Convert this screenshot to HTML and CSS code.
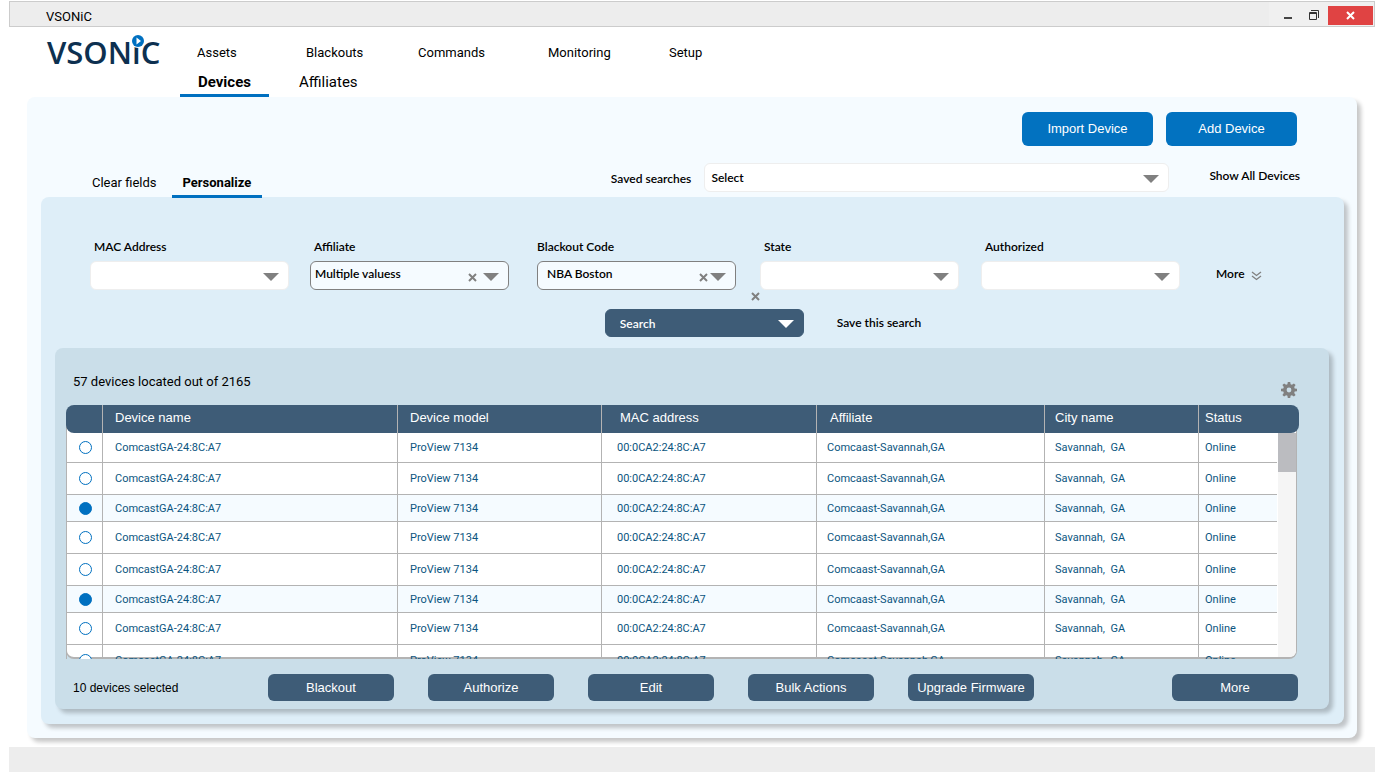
FILE: index.html
```html
<!DOCTYPE html>
<html lang="en">
<head>
  <meta charset="UTF-8">
  <title>VSONiC</title>
  <link rel="stylesheet" href="styles.css">
</head>
<body>

  <div class="window">
    <div class="titlebar">
      <span class="app-name">VSONiC</span>
      <div class="window-buttons">
        <button class="win-btn" aria-label="Minimize">
          <svg width="33" height="19"><path d="M15 11h8v2h-8z" fill="#444"/></svg>
        </button>
        <button class="win-btn" aria-label="Restore">
          <svg width="26" height="19" fill="none" stroke="#333"><path d="M9 4.500h7.500V12"/><path d="M7.500 6.500h7v7h-7z"/><path d="M7 7.500h8"/></svg>
        </button>
        <button class="win-btn win-close" aria-label="Close">
          <svg width="45" height="19" stroke="#fff" stroke-width="2"><path d="M19 6l7 7M26 6l-7 7"/></svg>
        </button>
      </div>
    </div>

    <header class="header">
      <svg class="logo" width="120" height="44" role="img" aria-label="VSONiC">
        <text x="0" y="30" class="logo-text">VSONiC</text>
        <circle cx="91" cy="7" r="7" fill="#fff"/>
        <circle cx="91" cy="7" r="6" fill="#0070c0"/>
        <path d="M89.500 3.500l4.500 3.500-4.500 3.500z" fill="#fff"/>
      </svg>
      <div class="menus">
        <nav class="main-nav">
          <a href="#">Assets</a>
          <a href="#">Blackouts</a>
          <a href="#">Commands</a>
          <a href="#">Monitoring</a>
          <a href="#">Setup</a>
        </nav>
        <nav class="sub-nav">
          <a href="#" class="active">Devices</a>
          <a href="#">Affiliates</a>
        </nav>
      </div>
    </header>

    <main class="page">
      <div class="page-actions">
        <button class="btn-primary">Import Device</button>
        <button class="btn-primary">Add Device</button>
      </div>

      <div class="search-bar">
        <div class="tabs">
          <a href="#">Clear fields</a>
          <a href="#" class="active">Personalize</a>
        </div>
        <div class="saved">
          <label for="saved">Saved searches</label>
          <div class="select saved-select">
            <select id="saved"><option>Select</option></select>
          </div>
          <a href="#" class="show-all">Show All Devices</a>
        </div>
      </div>

      <section class="filters">
        <div class="fields">
          <div class="field">
            <label for="mac">MAC Address</label>
            <div class="select"><select id="mac"><option></option></select></div>
          </div>
          <div class="field">
            <label for="affiliate">Affiliate</label>
            <div class="select filled">
              <select id="affiliate"><option>Multiple valuess</option></select>
              <button class="clear" aria-label="Clear affiliate"><svg width="9" height="9"><path d="M1 1l7 7M8 1l-7 7"/></svg></button>
            </div>
          </div>
          <div class="field flush">
            <label for="code">Blackout Code</label>
            <div class="select filled code-select">
              <select id="code"><option>NBA Boston</option></select>
              <button class="clear" aria-label="Clear blackout code"><svg width="9" height="9"><path d="M1 1l7 7M8 1l-7 7"/></svg></button>
            </div>
          </div>
          <div class="field">
            <label for="state">State</label>
            <div class="select"><select id="state"><option></option></select></div>
          </div>
          <div class="field">
            <label for="authorized">Authorized</label>
            <div class="select"><select id="authorized"><option></option></select></div>
          </div>
          <a href="#" class="more-link">More
            <svg width="11" height="10" fill="none" stroke="#808080" stroke-width="1.300"><path d="M1 1l4.500 3.500L10 1M1 5l4.500 3.500L10 5"/></svg>
          </a>
        </div>

        <div class="search-row">
          <button class="clear clear-all" aria-label="Clear search"><svg width="9" height="9"><path d="M1 1l7 7M8 1l-7 7"/></svg></button>
          <div class="select select-dark">
            <select id="search" aria-label="Search"><option>Search</option></select>
          </div>
          <a href="#">Save this search</a>
        </div>

        <section class="results">
          <div class="results-head">
            <span>57 devices located out of 2165</span>
            <button class="gear" aria-label="Table settings">
              <svg width="16" height="16" viewBox="0 0 16 16" fill="#808080">
                <path fill-rule="evenodd" d="M6.800 0h2.400l.4 2.300 1.300.5 2-1.400 1.700 1.700-1.400 2 .5 1.300 2.300.4v2.400l-2.300.4-.5 1.300 1.400 2-1.700 1.700-2-1.400-1.300.5-.4 2.300H6.800l-.4-2.300-1.300-.5-2 1.400-1.700-1.700 1.400-2-.5-1.300L0 9.200V6.800l2.300-.4.5-1.300-1.400-2 1.700-1.700 2 1.400 1.300-.5zM8 5.600a2.400 2.400 0 1 0 0 4.800a2.400 2.400 0 1 0 0-4.800z"/>
              </svg>
            </button>
          </div>

          <div class="table-wrap">
            <table class="devices">
              <colgroup>
                <col class="c-check"><col class="c-name"><col class="c-model"><col class="c-mac"><col class="c-aff"><col class="c-city"><col class="c-status"><col class="c-scroll">
              </colgroup>
              <thead>
                <tr>
                  <th></th>
                  <th>Device name</th>
                  <th>Device model</th>
                  <th class="mac">MAC address</th>
                  <th class="aff">Affiliate</th>
                  <th class="city">City name</th>
                  <th class="status">Status</th>
                  <th></th>
                </tr>
              </thead>
              <tbody id="rows"></tbody>
            </table>
            <div class="scrollbar"><div class="thumb"></div></div>
          </div>

          <div class="bulk">
            <span class="bulk-count">10 devices selected</span>
            <button class="btn-dark">Blackout</button>
            <button class="btn-dark">Authorize</button>
            <button class="btn-dark">Edit</button>
            <button class="btn-dark">Bulk Actions</button>
            <button class="btn-dark">Upgrade Firmware</button>
            <button class="btn-dark last">More</button>
          </div>
        </section>
      </section>
    </main>

    <footer class="footer"></footer>
  </div>

  <script>
    const selected = [false, false, true, false, false, true, false, false];

    document.getElementById('rows').innerHTML = selected.map((on, i) => `
      <tr class="${on ? 'selected' : ''}">
        <td><input type="checkbox" aria-label="Select device ${i + 1}" ${on ? 'checked' : ''}></td>
        <td>ComcastGA-24:8C:A7</td>
        <td>ProView 7134</td>
        <td class="mac">00:0CA2:24:8C:A7</td>
        <td class="aff">Comcaast-Savannah,GA</td>
        <td class="city">Savannah,&nbsp; GA</td>
        <td class="status">Online</td>
      </tr>
    `).join("");
  </script>

</body>
</html>
```
FILE: styles.css
```css
* {
  box-sizing: border-box;
}

body {
  margin: 0;
  background: #fff;
  color: #000;
  font-family: Roboto, sans-serif;
  font-size: 13px;
  line-height: 20px;
}

a {
  color: inherit;
  text-decoration: none;
}

button, select {
  font: inherit;
  color: inherit;
  padding: 0;
  border: none;
  background: none;
  cursor: pointer;
}

svg {
  display: block;
}

.window {
  margin: 0 9px;
  padding-top: 1px;
}

/* title bar */
.titlebar {
  display: flex;
  justify-content: space-between;
  height: 26px;
  padding-left: 36px;
  background: #ededed;
  border: 1px solid #ccc;
}

.app-name {
  padding-top: 5px;
}

.window-buttons {
  display: flex;
  align-items: flex-start;
  padding: 4px 1px 0 0;
  background: #f0f0f0;
}

.win-close {
  background: #e04343;
}

/* header */
.header {
  display: flex;
  height: 70px;
  padding: 7px 0 0 38px;
}

.logo {
  overflow: visible;
}

.logo-text {
  font-family: "Open Sans", sans-serif;
  font-size: 31px;
  font-weight: 600;
  fill: #0d3050;
}

.menus {
  padding: 9px 0 0 13px;
}

.main-nav {
  display: grid;
  grid-template-columns: 109px 112px 130px 121px auto;
  padding-left: 17px;
}

.sub-nav {
  display: flex;
  margin-top: 8px;
  font-size: 15px;
}

.sub-nav a {
  height: 26px;
  padding: 1px 18px 0;
  margin-right: 12px;
  border-bottom: 3px solid transparent;
}

.sub-nav .active,
.tabs .active {
  font-weight: bold;
  border-color: #0070c0;
}

/* page */
.page {
  margin: 0 18px;
  padding: 15px 13px 14px 14px;
  background: #f5fbff;
  border-radius: 8px;
  box-shadow: 4px 4px 4px rgba(0, 0, 0, 0.22);
}

.page-actions {
  display: flex;
  justify-content: flex-end;
  gap: 13px;
  padding-right: 47px;
}

.btn-primary {
  width: 131px;
  height: 34px;
  background: #0272c0;
  color: #fff;
  border-radius: 6px;
}

.btn-primary,
.btn-dark,
.devices th {
  font-family: "Liberation Sans", Arial, sans-serif;
  font-size: 13px;
}

.search-bar {
  display: flex;
  justify-content: space-between;
  height: 51px;
  padding: 17px 44px 0 40px;
}

.tabs {
  display: flex;
  padding-top: 7px;
}

.tabs a {
  position: relative;
  height: 28px;
  padding: 3px 11px 0;
  margin-right: 4px;
  border-bottom: 3px solid transparent;
}

.saved,
.filters {
  font-family: Lato, sans-serif;
  font-size: 12px;
  font-weight: 600;
}

.saved {
  display: flex;
  align-items: flex-start;
}

.saved label {
  padding: 6px 13px 0 0;
}

.saved-select {
  width: 465px;
}

.show-all {
  padding: 3px 0 0 40px;
}

/* drop-downs */
.select {
  position: relative;
}

.select select {
  display: block;
  appearance: none;
  width: 100%;
  height: 29px;
  padding: 0 44px 0 6px;
  background: #fff;
  border: 1px solid #eee;
  border-radius: 6px;
}

.select::after {
  content: "";
  position: absolute;
  top: 12px;
  right: 10px;
  border: 8px solid transparent;
  border-top-color: #808080;
  border-bottom: none;
  pointer-events: none;
}

.select.filled select {
  background: #f5fbff;
  border-color: #808080;
  padding: 0 44px 4px 4px;
}

.select.code-select select {
  padding-left: 9px;
}

.select.filled .clear {
  position: absolute;
  top: 12px;
  right: 32px;
}

.select.code-select .clear {
  right: 28px;
}

.clear svg {
  stroke: #808080;
  stroke-width: 2;
}

/* filters */
.filters {
  padding: 40px 15px 15px 14px;
  background: #deeef8;
  border-radius: 8px;
  box-shadow: 4px 4px 4px rgba(0, 0, 0, 0.22);
}

.fields {
  display: grid;
  grid-template-columns: 220fr 227fr 223fr 221fr 235fr 113fr;
  padding-left: 35px;
}

.field label {
  display: block;
  padding-left: 4px;
  margin-bottom: 4px;
}

.field.flush label {
  padding-left: 0;
}

.field .select {
  width: 199px;
}

.more-link {
  display: flex;
  gap: 6px;
  padding-top: 27px;
}

.more-link svg {
  margin-top: 7px;
}

.search-row {
  position: relative;
  display: flex;
  align-items: center;
  justify-content: center;
  gap: 33px;
  padding: 19px 0 11px 142px;
}

.clear-all {
  position: absolute;
  top: 2px;
  left: 696px;
}

.select-dark {
  width: 199px;
}

.select-dark select {
  height: 28px;
  padding-top: 2px;
  padding-left: 14px;
  background: #3e5c77;
  color: #fff;
  border-color: #3e5c77;
}

.select-dark::after {
  top: 11px;
  border-top-color: #fff;
}

/* results */
.results {
  padding: 0 30px 8px 11px;
  background: #cadee9;
  border-radius: 8px;
  box-shadow: 4px 4px 4px rgba(0, 0, 0, 0.22);
  font-family: Roboto, sans-serif;
  font-size: 13px;
  font-weight: 400;
}

.results-head {
  display: flex;
  justify-content: space-between;
  height: 57px;
  padding: 24px 2px 0 7px;
}

.gear {
  height: 16px;
  margin-top: 10px;
}

.table-wrap {
  position: relative;
  z-index: 0;
  height: 254px;
  overflow: hidden;
}

/* white frame behind the rows */
.table-wrap::before {
  content: "";
  position: absolute;
  z-index: -1;
  inset: 10px 2px 0 0;
  background: #fff;
  border: 1px solid #b3b3b3;
  border-bottom-width: 2px;
  border-radius: 0 0 8px 8px;
}

.devices {
  width: 100%;
  table-layout: fixed;
  border-collapse: separate;
  border-spacing: 0;
}

.c-check { width: 37px; }
.c-name { width: 295px; }
.c-model { width: 204px; }
.c-mac { width: 215px; }
.c-aff { width: 228px; }
.c-city { width: 154px; }
.c-status { width: 78px; }
.c-scroll { width: 22px; }

.devices th {
  height: 28px;
  padding: 0 0 3px 12px;
  background: #3e5c77;
  color: #fff;
  border-right: 1px solid #b3b3b3;
  font-weight: 400;
  text-align: left;
}

.devices th:first-child {
  border-radius: 8px 0 0 8px;
}

.devices th:last-child {
  border-right: none;
  border-radius: 0 8px 8px 0;
}

.devices .status {
  padding-left: 6px;
  border-right: none;
}

.devices td {
  height: 32px;
  padding: 0 0 0 12px;
  border-right: 1px solid #b3b3b3;
  border-bottom: 1px solid #b3b3b3;
  color: #0b5580;
  font-size: 11px;
  line-height: 16px;
}

.devices tr:first-child td {
  height: 30px;
}

.devices .selected td {
  height: 27px;
  padding-top: 1px;
  background: #f5fbff;
}

.devices th.mac { padding-left: 18px; }
.devices td.mac { padding-left: 15px; }
.devices th.aff { padding-left: 13px; }
.devices td.aff,
.devices .city { padding-left: 10px; }

.devices td:first-child {
  background-clip: padding-box;
  border-left: 1px solid #b3b3b3;
}

.devices input {
  display: block;
  appearance: none;
  width: 13px;
  height: 13px;
  margin: 0;
  border: 1px solid #0070c0;
  border-radius: 50%;
  background: #fff;
}

.devices input:checked {
  background: #0070c0;
}

.scrollbar {
  position: absolute;
  top: 28px;
  right: 3px;
  bottom: 2px;
  width: 18px;
  background: #f5f5f5;
  border-radius: 0 0 6px 0;
}

.thumb {
  height: 39px;
  background: #bbbcc0;
}

.bulk {
  display: flex;
  align-items: center;
  gap: 34px;
  padding: 15px 1px 0 7px;
}

.bulk-count {
  width: 161px;
  font-family: "Liberation Sans", Arial, sans-serif;
  font-size: 12px;
}

.btn-dark {
  width: 126px;
  height: 27px;
  background: #3e5c77;
  color: #fff;
  border-radius: 6px;
}

.btn-dark.last {
  margin-left: auto;
}

.footer {
  height: 25px;
  margin-top: 9px;
  background: #ededed;
}
```
